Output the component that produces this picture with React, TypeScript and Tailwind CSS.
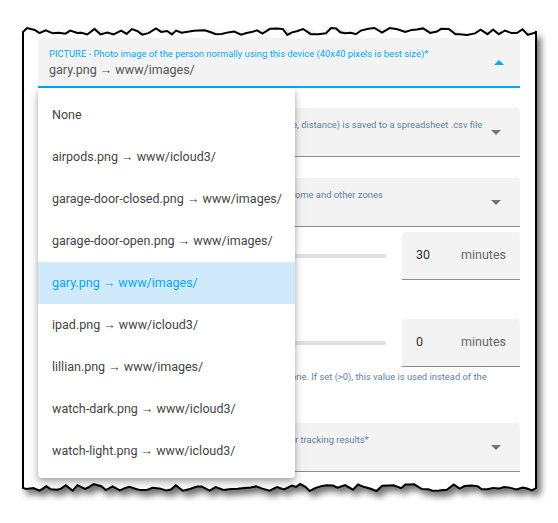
const items = [
  'None',
  'airpods.png → www/icloud3/',
  'garage-door-closed.png → www/images/',
  'garage-door-open.png → www/images/',
  'gary.png → www/images/',
  'ipad.png → www/icloud3/',
  'lillian.png → www/images/',
  'watch-dark.png → www/icloud3/',
  'watch-light.png → www/icloud3/',
];

// torn paper outline, deterministic jitter
function tornPath() {
  let seed = 7;
  const rnd = () => {
    seed = (seed * 16807) % 2147483647;
    return seed / 2147483647;
  };
  const left = 23;
  const right = 536;
  let d = `M ${left} 32`;
  for (let x = left + 4; x < right; x += 4 + rnd() * 4) {
    d += ` L ${x.toFixed(1)} ${(28 + rnd() * 7).toFixed(1)}`;
  }
  d += ` L ${right} 31 L ${right} 488`;
  for (let x = right - 4; x > left; x -= 4 + rnd() * 4) {
    d += ` L ${x.toFixed(1)} ${(484 + rnd() * 7).toFixed(1)}`;
  }
  d += ` L ${left} 488 Z`;
  return d;
}

function Caret({ up, color }: { up?: boolean; color: string }) {
  return (
    <svg width="10" height="5" viewBox="0 0 10 5" className="shrink-0">
      <path d={up ? 'M0 5 L5 0 L10 5 Z' : 'M0 0 L5 5 L10 0 Z'} fill={color} />
    </svg>
  );
}

// the start of these labels sits under the open menu
function SelectField({ label, indent, className }: { label: string; indent: string; className: string }) {
  return (
    <div className={`flex h-[49px] rounded-t bg-[#f3f3f3] border-b border-[#8d8d8d] pl-[11px] pr-[19px] ${className}`}>
      <div className="flex-1 flex pt-[10px] text-[9.4px] leading-[13px] text-[#5f7f9f] whitespace-nowrap">
        <span className={`shrink-0 ${indent}`} />
        <span>{label}</span>
      </div>
      <div className="self-center">
        <Caret color="#757575" />
      </div>
    </div>
  );
}

function SliderRow({ value, className }: { value: string; className: string }) {
  return (
    <div className={`flex items-center gap-[16px] ${className}`}>
      <div className="flex-1 h-[4px] rounded-full bg-[#e2e0e7]" />
      <div className="flex items-center w-[118px] h-[48px] rounded-t bg-[#f3f3f3] border-b border-[#8d8d8d] px-[14px] text-[12.5px] text-[#333]">
        <span className="w-[46px]">{value}</span>
        <span className="text-[#666]">minutes</span>
      </div>
    </div>
  );
}

export default function App() {
  return (
    <div className="relative w-[558px] h-[523px] bg-white overflow-hidden" style={{ fontFamily: 'Roboto, "Liberation Sans", sans-serif' }}>
      <svg className="absolute inset-0" width="558" height="523">
        <defs>
          <filter id="paper" x="-5%" y="-5%" width="115%" height="115%">
            <feDropShadow dx="4" dy="5" stdDeviation="3" floodColor="#000" floodOpacity="0.55" />
          </filter>
        </defs>
        <path d={tornPath()} fill="#fff" stroke="#000" strokeWidth="2" filter="url(#paper)" />
      </svg>

      <div className="relative w-[520px] pl-[38px] pt-[38px]">
        <div className="flex h-[50px] rounded-t bg-[#f3f3f3] border-b-2 border-[#03a9f4] pl-[11px] pr-[16px]">
          <div className="flex-1 pt-[9px]">
            <div className="text-[9.4px] leading-[13px] text-[#03a9f4] whitespace-nowrap">
              PICTURE - Photo image of the person normally using this device (40x40 pixels is best size)*
            </div>
            <div className="mt-[1px] text-[12.5px] leading-[17px] text-[#555]">gary.png → www/images/</div>
          </div>
          <div className="self-center">
            <Caret up color="#03a9f4" />
          </div>
        </div>

        <SelectField className="mt-[20px]" indent="w-[243px]" label="e, distance) is saved to a spreadsheet .csv file" />
        <SelectField className="mt-[21px]" indent="w-[246px]" label="ome and other zones" />

        <SliderRow value="30" className="mt-[5px]" />
        <SliderRow value="0" className="mt-[39px]" />

        <div className="mt-[3px] pl-[11px] flex text-[9.4px] leading-[13px] text-[#5f7f9f] whitespace-nowrap">
          <span className="shrink-0 w-[242px]" />
          <span>one. If set (&gt;0), this value is used instead of the</span>
        </div>

        <SelectField className="mt-[40px]" indent="w-[246px]" label="r tracking results*" />

        <div className="absolute left-[38px] top-[88px] w-[257px] h-[390px] bg-white rounded-b-[4px] py-[6px] shadow-[0_5px_10px_rgba(0,0,0,0.25),0_2px_4px_rgba(0,0,0,0.15)]">
          {items.map((t, i) => (
            <div
              key={t}
              className={`flex items-center h-[42px] px-[14px] text-[12.5px] whitespace-nowrap ${
                i === 4 ? 'bg-[#d0e9fb] text-[#03a9f4]' : 'text-[#444]'
              }`}
            >
              {t}
            </div>
          ))}
        </div>
      </div>
    </div>
  );
}
